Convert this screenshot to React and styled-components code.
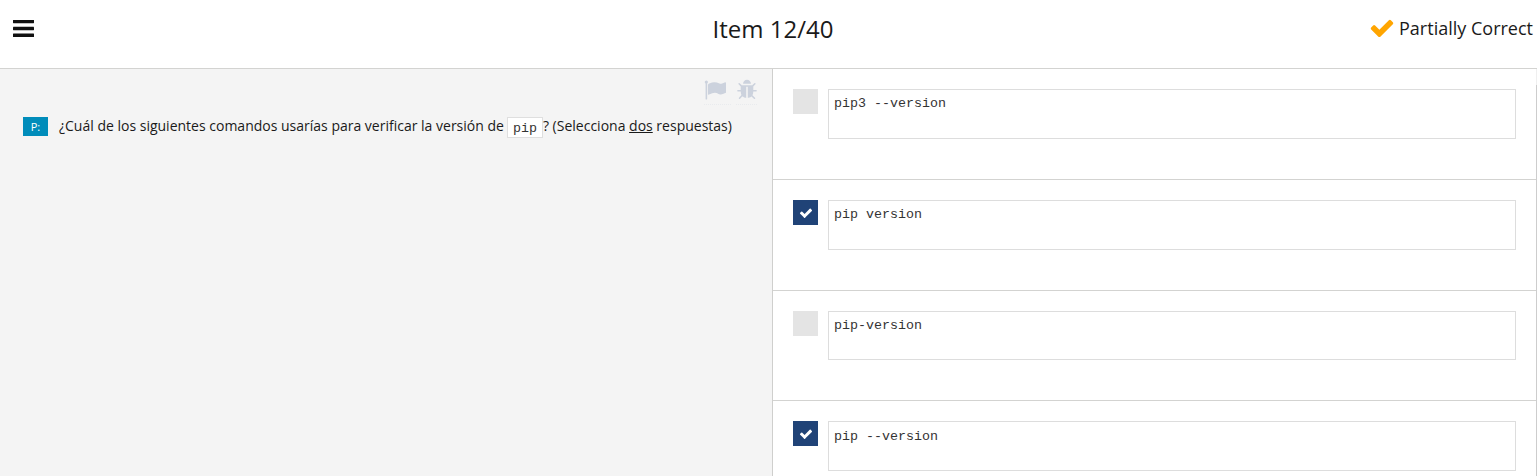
import React from 'react';
import styled, { createGlobalStyle } from 'styled-components';

const GlobalStyle = createGlobalStyle`
  * { box-sizing: border-box; }
  body {
    margin: 0;
    overflow: hidden;
    background: #fff;
    color: #1a1a1a;
    font-family: 'Open Sans', 'Noto Sans', sans-serif;
  }
`;

const Page = styled.div`
  display: flex;
  flex-direction: column;
  height: 476px;
  overflow: hidden;
`;

const Header = styled.header`
  display: grid;
  grid-template-columns: 1fr auto 1fr;
  align-items: center;
  height: 69px;
  flex: none;
  padding: 0 4px 11px 13px;
  border-bottom: 1px solid #d3d3d1;
`;

const MenuButton = styled.button`
  display: flex;
  width: 21px;
  padding: 0;
  border: 0;
  background: none;
`;

const MenuIcon = styled.svg`
  display: block;
  width: 21px;
  height: 18px;
  fill: #111;
`;

const Title = styled.h1`
  margin: 0;
  font-size: 24px;
  line-height: 34px;
  font-weight: 400;
`;

const Status = styled.div`
  display: flex;
  justify-content: flex-end;
  align-items: center;
  gap: 4px;
  padding-bottom: 2px;
  font-size: 18px;
  line-height: 24px;
`;

const Icon = styled.svg`
  display: block;
  flex: none;
  width: ${(p) => p.$size}px;
  height: ${(p) => p.$size}px;
  fill: currentColor;
  color: ${(p) => p.$color};
`;

const Body = styled.main`
  display: flex;
  flex: 1;
  min-height: 0;
`;

const QuestionPane = styled.section`
  width: 773px;
  flex: none;
  border-right: 1px solid #cfcfcd;
  background: #f4f4f4;
`;

const Tools = styled.div`
  display: flex;
  justify-content: flex-end;
  gap: 6px;
  height: 36px;
  padding: 10px 15px 0 0;
`;

const Tool = styled.span`
  display: flex;
  width: ${(p) => p.$width}px;
  height: 26px;
  margin-left: -1px;
  border-bottom: 1px dotted #e9ebee;
`;

const Question = styled.div`
  display: flex;
  align-items: flex-start;
  padding: 9px 0 0 23px;
  font-size: 14px;
  line-height: 24px;
  white-space: nowrap;
`;

const Tag = styled.span`
  width: 25px;
  height: 19px;
  margin: 3px 11px 0 0;
  background: #008cba;
  color: #fff;
  font-size: 11px;
  line-height: 20px;
  text-align: center;
`;

const InlineCode = styled.code`
  display: inline-block;
  height: 21px;
  margin: 0 0 0 -0.6px;
  padding: 0 5px;
  border: 1px solid #dfdfdf;
  background: #fff;
  color: #333;
  font-family: 'Liberation Mono', monospace;
  font-size: 13.33px;
  line-height: 22px;
  vertical-align: -0.5px;
`;

const Answers = styled.section`
  flex: 1;
  border-right: 1px solid;
  border-image: linear-gradient(#efefef 17px, #cdcdcd 17px) 1;
`;

const Answer = styled.div`
  display: flex;
  align-items: flex-start;
  gap: 10px;
  height: ${(p) => (p.$short ? 110 : 111)}px;
  padding: 20px 20px 40px;
  border-bottom: 1px solid #d3d3d1;

  &:last-child pre {
    padding-top: 6px;
  }
`;

const Checkbox = styled.span`
  display: flex;
  align-items: center;
  justify-content: center;
  width: 25px;
  height: 25px;
  flex: none;
  background: ${(p) => (p.$checked ? '#204377' : '#e4e4e4')};
`;

const Command = styled.pre`
  flex: 1;
  align-self: stretch;
  margin: 0;
  padding: 5px;
  border: 1px solid #dddddd;
  color: #333;
  font-family: 'Liberation Mono', monospace;
  font-size: 13.33px;
  line-height: 17px;
`;

const CHECK =
  'M1671 566q0 40-28 68l-724 724-136 136q-28 28-68 28t-68-28l-136-136-362-362q-28-28-28-68t28-68l136-136q28-28 68-28t68 28l294 295 656-657q28-28 68-28t68 28l136 136q28 28 28 68z';
const FLAG =
  'M320 256q0 72-64 110v1266q0 13-9.5 22.5t-22.5 9.5h-64q-13 0-22.5-9.5t-9.5-22.5v-1266q-64-38-64-110 0-53 37.5-90.5t90.5-37.5 90.5 37.5 37.5 90.5zm1472 64v763q0 25-12.5 38.5t-39.5 27.5q-215 116-369 116-61 0-123.5-22t-108.5-48-115.5-48-142.5-22q-192 0-464 146-17 9-33 9-26 0-45-19t-19-45v-742q0-32 31-55 21-14 79-43 236-120 421-120 107 0 200 29t219 88q38 19 88 19 54 0 117.5-21t110-47 88-47 54.5-21q26 0 45 19t19 45z';
const BUG =
  'M1696 960q0 26-19 45t-45 19h-224q0 171-67 290l208 209q19 19 19 45t-19 45q-18 19-45 19t-45-19l-198-197q-5 5-15 13t-42 28.5-65 36.5-82 29-97 13v-896h-128v896q-51 0-101.5-13.5t-87-33-66-39-43.5-32.5l-15-14-183 207q-20 21-48 21-24 0-43-16-19-18-20.5-44.5t15.5-46.5l202-227q-58-114-58-274h-224q-26 0-45-19t-19-45 19-45 45-19h224v-294l-173-173q-19-19-19-45t19-45 45-19 45 19l173 173h844l173-173q19-19 45-19t45 19 19 45-19 45l-173 173v294h224q26 0 45 19t19 45zm-480-576h-640q0-133 93.5-226.5t226.5-93.5 226.5 93.5 93.5 226.5z';

const Glyph = ({ d, size, color }) => (
  <Icon viewBox="0 0 1792 1792" $size={size} $color={color} aria-hidden="true">
    <path d={d} />
  </Icon>
);

const answers = [
  { text: 'pip3 --version', checked: false },
  { text: 'pip version', checked: true },
  { text: 'pip-version', checked: false, short: true },
  { text: 'pip --version', checked: true },
];

export default function App() {
  return (
    <Page>
      <GlobalStyle />
      <Header>
        <MenuButton aria-label="Menu">
          <MenuIcon viewBox="0 0 21 18" aria-hidden="true">
            <rect y="-0.2" width="21" height="3.4" rx="0.4" />
            <rect y="6.8" width="21" height="3.4" rx="0.4" />
            <rect y="13.6" width="21" height="3.5" rx="0.4" />
          </MenuIcon>
        </MenuButton>
        <Title>Item 12/40</Title>
        <Status>
          <Glyph d={CHECK} size={26} color="#ffa500" />
          Partially Correct
        </Status>
      </Header>
      <Body>
        <QuestionPane>
          <Tools>
            <Tool $width={27}>
              <Glyph d={FLAG} size={22} color="#ccd2dd" />
            </Tool>
            <Tool $width={21}>
              <Glyph d={BUG} size={22} color="#ccd2dd" />
            </Tool>
          </Tools>
          <Question>
            <Tag>P:</Tag>
            <span>
              ¿Cuál de los siguientes comandos usarías para verificar la versión de{' '}
              <InlineCode>pip</InlineCode>? (Selecciona <u>dos</u> respuestas)
            </span>
          </Question>
        </QuestionPane>
        <Answers>
          {answers.map((a) => (
            <Answer key={a.text} $short={a.short}>
              <Checkbox $checked={a.checked}>
                {a.checked && <Glyph d={CHECK} size={14} color="#fff" />}
              </Checkbox>
              <Command>{a.text}</Command>
            </Answer>
          ))}
        </Answers>
      </Body>
    </Page>
  );
}
